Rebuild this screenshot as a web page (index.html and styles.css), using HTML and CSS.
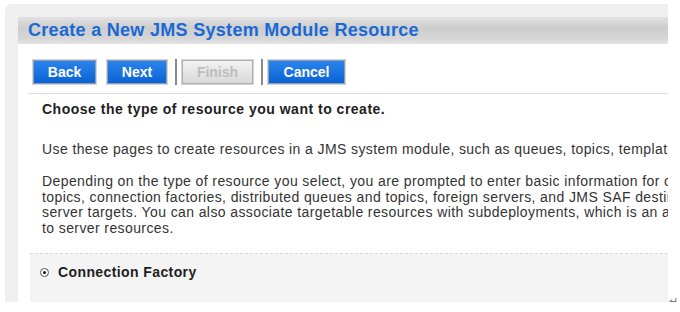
FILE: index.html
```html
<!DOCTYPE html>
<html lang="en">
<head>
    <meta charset="UTF-8">
    <title>Create a New JMS System Module Resource</title>
    <link rel="stylesheet" href="styles.css">
</head>
<body>
    <div class="outer">
        <div class="panel">
            <div class="panel-header">
                <h1>Create a New JMS System Module Resource</h1>
            </div>
            <div class="panel-body">
                <!-- wizard buttons -->
                <div class="toolbar">
                    <button class="button">Back</button>
                    <button class="button btn-next">Next</button>
                    <span class="sep"></span>
                    <button class="button disabled btn-finish" disabled>Finish</button>
                    <span class="sep"></span>
                    <button class="button btn-cancel">Cancel</button>
                </div>

                <div class="intro">
                    <p class="lead">Choose the type of resource you want to create.</p>
                    <p>Use these pages to create resources in a JMS system module, such as queues, topics, templates, and connection factories.</p>
                    <p>Depending on the type of resource you select, you are prompted to enter basic information for creating the resource. For queues,<br>topics, connection factories, distributed queues and topics, foreign servers, and JMS SAF destinations, you can also proceed to targeting<br>server targets. You can also associate targetable resources with subdeployments, which is an advanced mechanism for grouping JMS resources<br>to server resources.</p>
                </div>

                <div class="choices">
                    <label class="choice">
                        <span class="radio"></span>
                        Connection Factory
                    </label>
                </div>
            </div>
        </div>
    </div>
    <span class="para-mark">&#8629;</span>
</body>
</html>
```

FILE: styles.css
```css
/* General styles */
body {
    font-family: "Liberation Sans", Arial, sans-serif;
    background-color: #ffffff;
    margin: 0;
    padding: 4px 0 0 5px;
    display: flex;
    align-items: flex-start;
}

/* Outer grey frame */
.outer {
    width: 663px;
    height: 298px;
    background-color: #efefef;
    border-radius: 6px 0 0 0;
    box-sizing: border-box;
    padding: 13px 0 0 13px;
    overflow: hidden;
}

.panel {
    background-color: #ffffff;
    height: 100%;
    overflow: hidden;
}

/* Header bar */
.panel-header {
    height: 27px;
    background: linear-gradient(#e2e2e2, #cdcdcd 40%, #d6d6d6 80%, #e4e4e4);
    padding-left: 10px;
    display: flex;
    align-items: center;
}

.panel-header h1 {
    margin: 0;
    font-size: 18px;
    letter-spacing: 0.3px;
    font-weight: bold;
    color: #1a68d6;
    white-space: nowrap;
}

/* Buttons */
.toolbar {
    margin-left: 10px;
    padding: 15px 0 8px 5px;
    border-bottom: 1px solid #dddddd;
    display: flex;
    align-items: center;
}

.button {
    height: 24px;
    padding: 0;
    font-family: inherit;
    font-size: 14px;
    font-weight: bold;
    color: #ffffff;
    background: linear-gradient(#2a84ec, #0b62d4);
    border: 1px solid #8d9fb5;
    box-shadow: 0 0 0 1px #d4d4d4;
    width: 63px;
}

.btn-next {
    width: 60px;
    margin-left: 11px;
}

.btn-finish {
    width: 71px;
}

.btn-cancel {
    width: 77px;
}

.button.disabled {
    color: #bdbdbd;
    background: linear-gradient(#f2f2f2, #d9d9d9);
    border-color: #b0b0b0;
}

.sep {
    width: 2px;
    height: 26px;
    background-color: #8a8a8a;
    margin: 0 5px 0 8px;
}

/* Intro text */
.intro {
    padding: 0 0 0 24px;
    font-size: 14px;
    letter-spacing: 0.4px;
    color: #333333;
    white-space: nowrap;
}

.intro p {
    margin: 0;
    line-height: 15.5px;
}

.intro .lead {
    margin-top: 8px;
    font-weight: bold;
    letter-spacing: 0.5px;
    color: #1e1e1e;
}

.intro p + p {
    margin-top: 24px;
}

.intro p + p + p {
    margin-top: 17px;
}

/* Radio choices */
.choices {
    margin: 17px 0 0 12px;
    border-top: 1px dashed #d8d8d8;
    background-color: #f4f4f4;
    height: 60px;
    padding: 10px 0 0 10px;
}

.choice {
    display: flex;
    align-items: center;
    gap: 9px;
    font-size: 14px;
    letter-spacing: 0.4px;
    font-weight: bold;
    color: #1e1e1e;
}

.radio {
    width: 7px;
    height: 7px;
    border: 1px solid #555555;
    border-radius: 50%;
    position: relative;
    background-color: #ffffff;
}

.radio::after {
    content: "";
    position: absolute;
    left: 2px;
    top: 2px;
    width: 3px;
    height: 3px;
    border-radius: 50%;
    background-color: #111111;
}

.para-mark {
    align-self: flex-end;
    margin: 0 0 -6px 1px;
    font-size: 11px;
    color: #777777;
}
```
